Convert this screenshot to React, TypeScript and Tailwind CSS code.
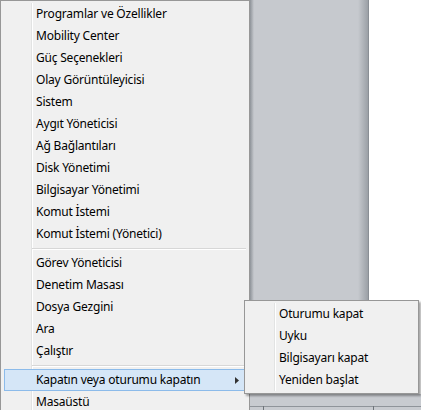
import React from "react";

const group1 = [
  "Programlar ve Özellikler",
  "Mobility Center",
  "Güç Seçenekleri",
  "Olay Görüntüleyicisi",
  "Sistem",
  "Aygıt Yöneticisi",
  "Ağ Bağlantıları",
  "Disk Yönetimi",
  "Bilgisayar Yönetimi",
  "Komut İstemi",
  "Komut İstemi (Yönetici)",
];
const group2 = ["Görev Yöneticisi", "Denetim Masası", "Dosya Gezgini", "Ara", "Çalıştır"];
const sub = ["Oturumu kapat", "Uyku", "Bilgisayarı kapat", "Yeniden başlat"];

function Item({ label }: { label: string }) {
  return (
    <div className="h-[22px] flex items-center pl-[35px] text-[12px] tracking-[-0.2px] text-black leading-none">{label}</div>
  );
}

function Sep() {
  return (
    <div className="h-[7px] flex items-center pl-[31px] pr-[3px]">
      <div className="w-full h-px bg-[#d7d7d7] border-b border-white box-content"></div>
    </div>
  );
}

export default function App() {
  return (
    <div
      className="w-[421px] h-[410px] relative overflow-hidden bg-white flex"
      style={{ fontFamily: '"Noto Sans", "Open Sans", sans-serif' }}
    >
      {/* main menu */}
      <div className="relative w-[250px] h-[410px] bg-[#f0f0f0] border-l border-t border-r border-[#979797] pt-[2px] shrink-0">
        <div className="absolute left-[30px] top-[2px] bottom-0 w-px bg-[#e2e3e3] border-r border-white box-content"></div>
        <div className="relative flex flex-col">
          {group1.map((l) => (
            <Item key={l} label={l} />
          ))}
          <Sep />
          {group2.map((l) => (
            <Item key={l} label={l} />
          ))}
          <Sep />
          <div className="h-[22px] ml-[3px] mr-[4px] flex items-center pl-[31px] pr-[5px] bg-[#d5e6f7] border border-[#8cbbea] text-[12px] tracking-[-0.2px] text-black leading-none">
            <span className="flex-1">Kapatın veya oturumu kapatın</span>
            <svg width="4" height="7" viewBox="0 0 4 7" className="shrink-0">
              <polygon points="0,0 4,3.5 0,7" fill="#333" />
            </svg>
          </div>
          <Item label="Masaüstü" />
        </div>
      </div>

      {/* gray background window */}
      <div className="relative w-[119px] h-[410px] shrink-0 bg-[#c6c9ce] flex">
        <div className="w-[4px] h-full bg-gradient-to-r from-[#8e9399] to-[#c6c9ce]"></div>
        <div className="flex-1"></div>
        <div className="w-[10px] h-full bg-gradient-to-r from-[#c6c9ce] to-[#9ba0a6]"></div>
        <div className="w-px h-full bg-[#8a8f95]"></div>
      </div>
      <div className="flex-1 bg-white"></div>

      {/* lower window strip under submenu */}
      <div className="absolute left-[250px] top-[394px] w-[171px] h-[16px] bg-[#c8cbd0]">
        <div className="absolute left-0 right-0 top-[12px] h-px bg-[#8f949a]"></div>
        <div className="absolute left-[13px] top-[12px] w-px h-[4px] bg-[#6f747a]"></div>
        <div className="absolute left-[123px] top-[12px] w-px h-[4px] bg-[#6f747a]"></div>
      </div>

      {/* submenu */}
      <div className="absolute left-[244px] top-[300px] w-[175px] h-[94px] bg-[#f0f0f0] border border-[#979797] pt-[2px] shadow-[2px_2px_2px_rgba(0,0,0,0.35)]">
        <div className="absolute left-[29px] top-[2px] bottom-[2px] w-px bg-[#e2e3e3] border-r border-white box-content"></div>
        <div className="relative flex flex-col">
          {sub.map((l) => (
            <div key={l} className="h-[22px] flex items-center pl-[34px] text-[12px] tracking-[-0.2px] text-black leading-none">
              {l}
            </div>
          ))}
        </div>
      </div>
    </div>
  );
}
